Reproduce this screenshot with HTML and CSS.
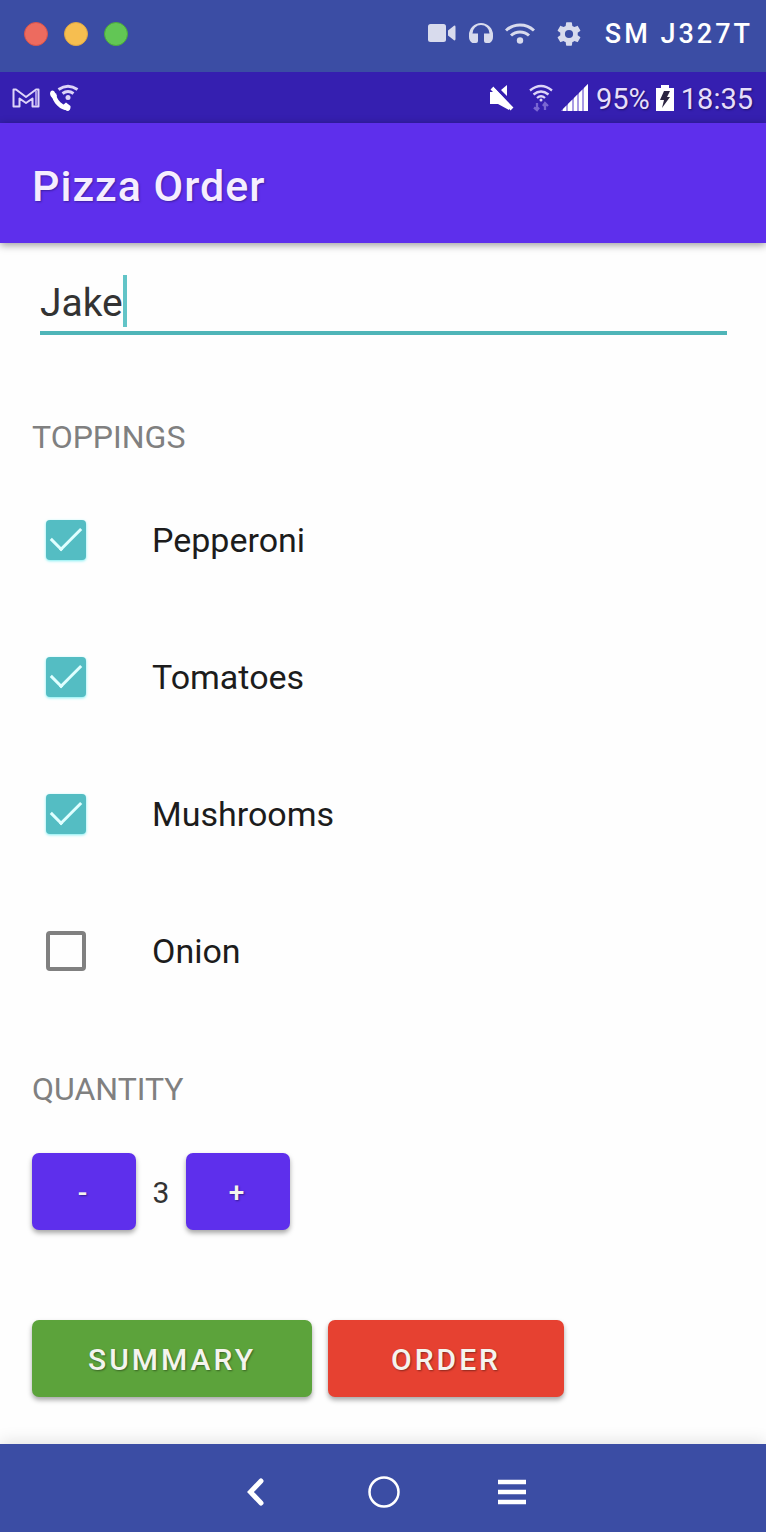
FILE: index.html
```html
<!DOCTYPE html>
<html lang="en">
<head>
<meta charset="utf-8">
<meta name="viewport" content="width=device-width, initial-scale=1">
<title>Pizza Order</title>
<link rel="stylesheet" href="styles.css">
</head>
<body>
<div class="window">
  <header class="titlebar">
    <div class="lights">
      <button class="light light-close" aria-label="Close"></button>
      <button class="light light-min" aria-label="Minimize"></button>
      <button class="light light-max" aria-label="Maximize"></button>
    </div>
    <div class="tools">
      <svg width="28" height="24" viewBox="0 0 28 24" fill="currentColor"><rect x="0" y="2" width="18" height="18" rx="2.5"/><path d="M20 8.500L26 3.700Q27.500 3.200 27.500 5V17Q27.500 18.800 26 18.300L20 13.500Z"/></svg>
      <svg class="tool-audio" width="24" height="24" viewBox="0 0 24 24"><g fill="currentColor"><path d="M0 13A12 12 0 0 1 24 13V15Q24 19 20.500 21H17Q15 21 15 19V11.500H20.500A8.500 8.500 0 0 0 3.500 11.500H9V19Q9 21 7 21H3.500Q0 19 0 15Z"/></g></svg>
      <svg class="tool-wifi" width="30" height="24" viewBox="0 0 30 24"><g fill="none" stroke="currentColor" stroke-width="3"><path d="M1 8.500A20.500 20.500 0 0 1 29 8.500"/><path d="M6 13.500A13 13 0 0 1 24 13.500"/></g><circle cx="15" cy="18.500" r="3.200" fill="currentColor"/></svg>
      <svg class="tool-gear" width="28" height="28" viewBox="0 0 24 24" fill="currentColor"><path d="M19.430 12.980c.04-.32.07-.64.07-.98s-.03-.66-.07-.98l2.110-1.650c.19-.15.24-.42.12-.64l-2-3.460c-.12-.22-.39-.3-.61-.22l-2.490 1c-.52-.4-1.080-.73-1.690-.98l-.38-2.650A.49.49 0 0 0 14 2h-4c-.25 0-.46.18-.49.42l-.38 2.650c-.61.25-1.170.59-1.690.98l-2.490-1c-.23-.09-.49 0-.61.22l-2 3.460c-.13.22-.07.49.12.64l2.110 1.650c-.04.32-.07.65-.07.98s.03.66.07.98l-2.110 1.650c-.19.15-.24.42-.12.64l2 3.460c.12.22.39.3.61.22l2.490-1c.52.4 1.080.73 1.690.98l.38 2.650c.03.24.24.42.49.42h4c.25 0 .46-.18.49-.42l.38-2.650c.61-.25 1.170-.59 1.690-.98l2.490 1c.23.09.49 0 .61-.22l2-3.460c.12-.22.07-.49-.12-.64l-2.110-1.650zM12 15.500a3.500 3.500 0 1 1 0-7 3.500 3.500 0 0 1 0 7z"/></svg>
    </div>
    <span class="device">SM J327T</span>
  </header>

  <div class="statusbar">
    <svg width="28" height="22" viewBox="0 0 28 22" fill="none" stroke="#ddd4f8" stroke-width="2" stroke-linejoin="round"><path d="M1.500 2.500H4L14 10L24 2.500H26.500V19.500H20.500V11.500L14 16L7.500 11.500V19.500H1.500Z"/><path d="M24 4V19" stroke="#a795e6"/></svg>
    <svg class="status-call" width="30" height="28" viewBox="0 0 30 28" fill="none" stroke="#fff"><path d="M4 9.500C4 17 12 25 18.500 24" stroke-width="4.500"/><path d="M0 9Q1 5.500 4 7L7 12L4 15Q0 13 0 9ZM13 21L16 18.500L20.500 22Q21 27 17 27Q14 25 13 21Z" fill="#fff" stroke="none"/><g stroke="#ddd4f8" stroke-width="3"><path d="M8.500 5.500Q18 -1 27.500 5.500"/><path d="M12.500 9.500Q18 5.500 23.500 9.500"/></g><circle cx="18" cy="13.500" r="2.500" fill="#ddd4f8" stroke="none"/></svg>
    <span class="spacer"></span>
    <svg width="26" height="28" viewBox="0 0 26 28" fill="#fff"><path d="M1 8H5L20 20V26L9 20H1ZM12 6L18 1V12Z"/><path d="M3 4L23 25" stroke="#fff" stroke-width="4"/><path d="M5 2L25 22" stroke="#351fb0" stroke-width="1.500"/></svg>
    <svg class="status-wifi" width="24" height="28" viewBox="0 0 24 28" fill="none" stroke="#ddd4f8" stroke-width="2.300"><path d="M1 6.500Q12 -2.500 23 6.500"/><path d="M4.500 10.500Q12 4.500 19.500 10.500"/><path d="M8 14Q12 10.500 16 14"/><circle cx="12" cy="16" r="1.500" fill="#ddd4f8" stroke="none"/><path d="M8 19V26M5 23.500L8 26L10 23.500M16 26V19M14 22L16 19L19 22" stroke="#7966d2"/></svg>
    <svg class="status-signal" width="28" height="28" viewBox="0 0 28 28"><path d="M0 27L27 0V27Z" fill="#a99be4"/><path d="M2 27V25L5 22V27ZM7 27V20L11 16V27ZM13 27V14L16 11V27ZM18 27V9L21 6V27ZM23 27V4L27 0V27Z" fill="#fff"/></svg>
    <span class="status-text">95%</span>
    <svg class="status-battery" width="18" height="26" viewBox="0 0 18 26"><path d="M0 3H5V0H13V3H18V26H0Z" fill="#fff"/><path d="M8 6H14L11 12H14L6 23L8 15H4Z" fill="#2b2440"/></svg>
    <span class="status-text">18:35</span>
  </div>

  <div class="appbar"><h1 class="title">Pizza Order</h1></div>

  <main class="content">
    <label class="field">
      <input class="field-input" type="text" value="Jake" aria-label="Customer name">
      <span class="caret"></span>
    </label>

    <h2 class="section toppings-title">TOPPINGS</h2>
    <div class="toppings">
      <label class="topping"><input class="check" type="checkbox" checked>Pepperoni</label>
      <label class="topping"><input class="check" type="checkbox" checked>Tomatoes</label>
      <label class="topping"><input class="check" type="checkbox" checked>Mushrooms</label>
      <label class="topping"><input class="check" type="checkbox">Onion</label>
    </div>

    <h2 class="section quantity-title">QUANTITY</h2>
    <div class="quantity">
      <button class="btn btn-step" aria-label="Decrease quantity">-</button>
      <span class="count">3</span>
      <button class="btn btn-step" aria-label="Increase quantity">+</button>
    </div>

    <div class="actions">
      <button class="btn btn-summary">SUMMARY</button>
      <button class="btn btn-order">ORDER</button>
    </div>
  </main>

  <nav class="navbar">
    <button class="nav-btn" aria-label="Back"><svg width="34" height="34" viewBox="0 0 34 34"><path d="M22 6L11.500 17L22 28" fill="none" stroke="#fff" stroke-width="5" stroke-linecap="round"/></svg></button>
    <button class="nav-btn" aria-label="Home"><svg width="34" height="34" viewBox="0 0 34 34"><circle cx="17" cy="17" r="14.500" fill="none" stroke="#fff" stroke-width="2.500"/></svg></button>
    <button class="nav-btn" aria-label="Menu"><svg width="34" height="34" viewBox="0 0 34 34"><path d="M3 7H31M3 17H31M3 27H31" stroke="#fff" stroke-width="4.500"/></svg></button>
  </nav>
</div>
</body>
</html>
```
FILE: styles.css
```css
* { box-sizing: border-box; }

body {
  margin: 0;
  background: #fefefe;
  color: #1c1c1c;
  font-family: Roboto, "Liberation Sans", sans-serif;
}

button, input { font: inherit; }

.window {
  display: flex;
  flex-direction: column;
  min-height: 100vh;
}

.titlebar {
  display: flex;
  align-items: center;
  justify-content: flex-end;
  height: 72px;
  padding: 0 13px 4px 24px;
  background: #3b4da4;
}

.lights { display: flex; gap: 16px; margin-right: auto; }

.light {
  width: 24px;
  height: 24px;
  padding: 0;
  border: 1px solid;
  border-radius: 50%;
}
.light-close { background: #ed6b5f; border-color: #d9544a; }
.light-min { background: #f6be50; border-color: #dfa744; }
.light-max { background: #62c655; border-color: #4ca93c; }

.tools { display: flex; align-items: center; color: #d8dbed; }
.tool-audio { margin-left: 13px; }
.tool-wifi { margin-left: 12px; }
.tool-gear { margin-left: 20px; }

.device {
  margin-left: 22px;
  color: #fff;
  font-size: 27px;
  font-weight: 500;
  line-height: 32px;
  letter-spacing: 3px;
}

.statusbar {
  display: flex;
  align-items: center;
  height: 51px;
  padding: 0 13px 0 12px;
  background: #351fb0;
}
.status-call { margin-left: 10px; }
.spacer { flex: 1; }
.status-wifi { margin-left: 14px; }
.status-signal { margin-left: 8px; }
.status-battery { margin-left: 6px; }
.status-text {
  margin-left: 7px;
  padding-top: 2px;
  color: #e6defa;
  font-size: 29px;
  line-height: 32px;
  text-shadow: 1px 1px 2px #1d1268;
}

.appbar {
  display: flex;
  align-items: center;
  height: 120px;
  padding: 6px 32px 0;
  background: #5e2fec;
  box-shadow: 0 2px 8px rgba(0, 0, 0, 0.4);
}

.title {
  margin: 0;
  color: #f5edff;
  font-size: 43px;
  font-weight: 500;
  line-height: 48px;
  letter-spacing: 1px;
  text-shadow: 1px 1px 2px rgba(40, 20, 110, 0.6);
}

.content { flex: 1; padding: 32px 32px 46px; }

.field {
  display: flex;
  align-items: flex-start;
  height: 60px;
  margin: 0 7px 0 8px;
  border-bottom: 4px solid #4fb5b8;
}

.field-input {
  field-sizing: content;
  min-width: 0;
  height: 56px;
  padding: 0;
  border: 0;
  outline: 0;
  background: transparent;
  color: #333;
  font-size: 39px;
}

.caret { width: 4px; height: 52px; background: #62c4c7; }

.section {
  margin: 0;
  color: #808080;
  font-size: 32px;
  font-weight: 400;
  line-height: 40px;
}
.toppings-title { margin-top: 82px; }
.toppings { margin-top: 14px; }
.quantity-title { margin-top: 50px; }

.topping {
  display: flex;
  align-items: center;
  gap: 66px;
  height: 137px;
  padding-left: 14px;
  font-size: 34px;
}

.check {
  display: grid;
  place-items: center;
  appearance: none;
  width: 40px;
  height: 40px;
  margin: 0;
  border: 4px solid #808080;
  border-radius: 4px;
}
.check:checked {
  border: 0;
  background: #54bdc3;
  box-shadow: 0 1px 3px #7deef2;
}
.check:checked::before {
  content: "";
  width: 27px;
  height: 13px;
  margin-bottom: 10px;
  border: solid #e0ffff;
  border-width: 0 0 3px 3px;
  transform: rotate(-45deg);
}

.quantity { display: flex; align-items: center; margin-top: 44px; }

.btn {
  height: 77px;
  padding: 2px 0 0;
  border: 0;
  border-radius: 7px;
  color: #f4f4ee;
  font-size: 30px;
  font-weight: 500;
  letter-spacing: 3px;
  text-shadow: 1px 1px 2px rgba(0, 0, 0, 0.4);
  box-shadow: 0 3px 5px rgba(0, 0, 0, 0.35);
}
.btn-step { width: 104px; background: #5e2fec; font-size: 28px; }
.btn-summary { width: 280px; background: #5ca33b; }
.btn-order { width: 236px; background: #e64131; }

.count { width: 50px; padding-top: 2px; color: #333; font-size: 30px; text-align: center; }

.actions { display: flex; gap: 16px; margin-top: 90px; }

.navbar {
  display: flex;
  align-items: center;
  justify-content: center;
  gap: 94px;
  height: 88px;
  padding: 8px 0 0 2px;
  background: #3b4da4;
  box-shadow: 0 -2px 16px rgba(0, 0, 0, 0.12);
}

.nav-btn {
  display: flex;
  padding: 0;
  border: 0;
  background: transparent;
}
```
